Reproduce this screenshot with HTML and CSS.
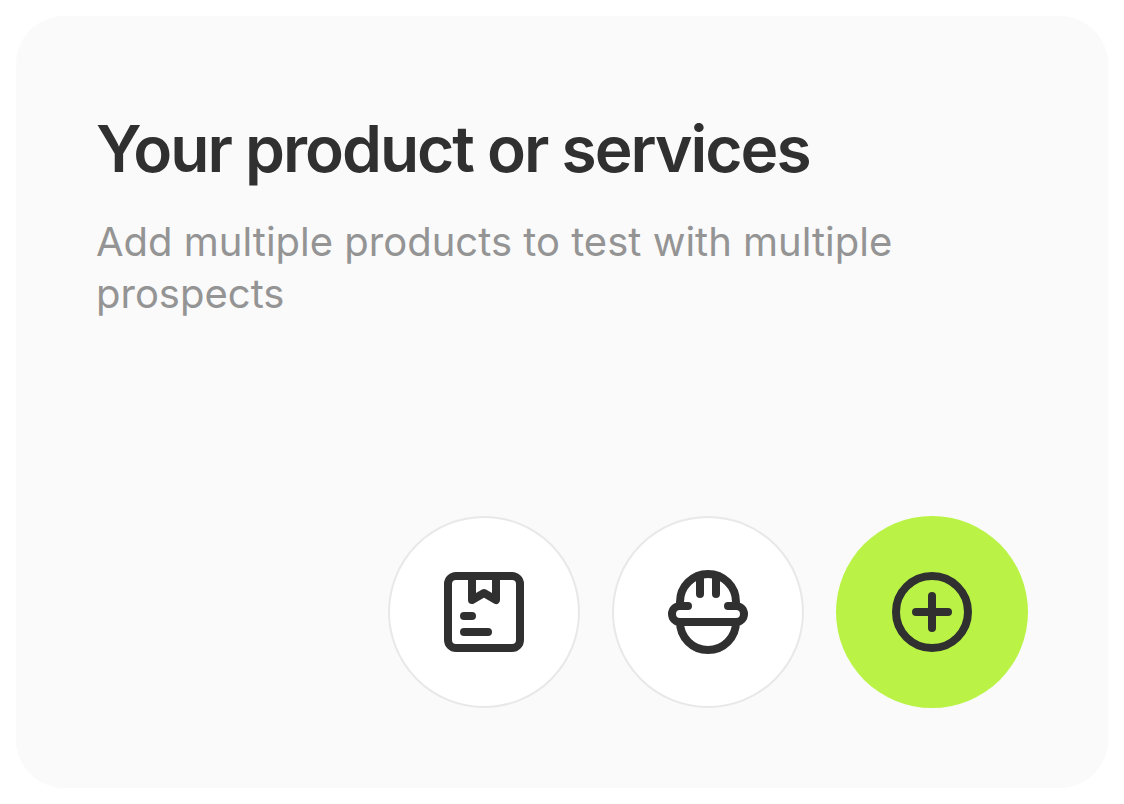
FILE: index.html
```html
<!DOCTYPE html>
<html lang="en">
<head>
<meta charset="utf-8">
<meta name="viewport" content="width=device-width, initial-scale=1">
<title>Your product or services</title>
<link rel="stylesheet" href="styles.css">
</head>
<body>
<main class="card">
  <header class="intro">
    <h1 class="title">Your product or services</h1>
    <p class="subtitle">Add multiple products to test with multiple prospects</p>
  </header>
  <div class="actions">
    <button class="action" type="button" aria-label="Product">
      <svg class="icon" viewBox="0 0 96 96" aria-hidden="true">
        <rect x="12" y="12" width="72" height="72" rx="8"/>
        <path d="M36 12v24l12-7 12 7V12M28 52h8M28 68h24"/>
      </svg>
    </button>
    <button class="action" type="button" aria-label="Service">
      <svg class="icon" viewBox="0 0 96 96" aria-hidden="true">
        <path d="M28 42h-8a8 8 0 0 0 0 16h56a8 8 0 0 0 0-16h-8M20 42v-4a28 28 0 0 1 56 0v4M20 58a28 28 0 0 0 56 0M40 14v16M56 14v16"/>
      </svg>
    </button>
    <button class="action action-primary" type="button" aria-label="Add">
      <svg class="icon" viewBox="0 0 96 96" aria-hidden="true">
        <circle cx="48" cy="48" r="36"/>
        <path d="M48 32v32M32 48h32"/>
      </svg>
    </button>
  </div>
</main>
</body>
</html>
```
FILE: styles.css
```css
* {
  box-sizing: border-box;
}

body {
  margin: 0;
  padding: 16px;
  min-height: 100vh;
  display: flex;
  background: #fff;
  color: #303030;
  font-family: Inter, "Liberation Sans", sans-serif;
}

.card {
  flex: 1;
  display: flex;
  flex-direction: column;
  justify-content: space-between;
  gap: 48px;
  padding: 96px 80px 80px;
  border-radius: 48px;
  background: #fafafa;
}

.title {
  margin: 0;
  font-size: 64px;
  font-weight: 600;
  line-height: 74px;
  letter-spacing: -2px;
}

.subtitle {
  margin: 30px 0 0;
  max-width: 880px;
  color: #949494;
  font-size: 40px;
  font-weight: 400;
  line-height: 52px;
}

.actions {
  display: flex;
  justify-content: flex-end;
  gap: 32px;
}

.action {
  display: flex;
  align-items: center;
  justify-content: center;
  width: 192px;
  height: 192px;
  padding: 0;
  border: 2px solid #e8e8e8;
  border-radius: 50%;
  background: #fff;
  color: inherit;
  cursor: pointer;
}

.action-primary {
  border: 0;
  background: #baf345;
}

.icon {
  width: 96px;
  height: 96px;
  fill: none;
  stroke: currentColor;
  stroke-width: 8;
  stroke-linecap: round;
  stroke-linejoin: round;
}
```
